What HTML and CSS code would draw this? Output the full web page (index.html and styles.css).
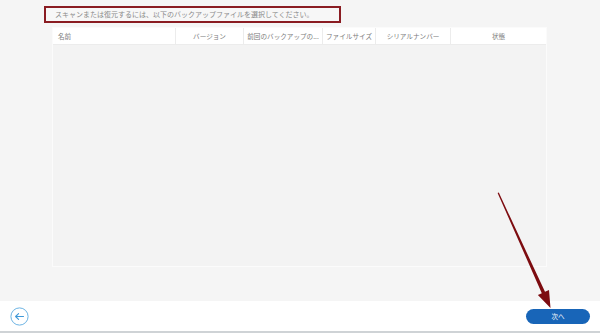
FILE: index.html
```html
<!DOCTYPE html>
<html lang="ja">
<head>
<meta charset="utf-8">
<link rel="stylesheet" href="styles.css">
</head>
<body>
<div class="page">
  <main class="main">
    <div class="notice">スキャンまたは復元するには、以下のバックアップファイルを選択してください。</div>
    <div class="table">
      <div class="thead">
        <div class="th c1 left">名前</div>
        <div class="th c2">バージョン</div>
        <div class="th c3">前回のバックアップの...</div>
        <div class="th c4">ファイルサイズ</div>
        <div class="th c5">シリアルナンバー</div>
        <div class="th c6">状態</div>
      </div>
      <div class="tbody"></div>
    </div>
  </main>
  <footer class="footer">
    <button class="back" aria-label="戻る">
      <svg width="19" height="19" viewBox="0 0 19 19">
        <circle cx="9.5" cy="9.5" r="8.6" fill="none" stroke="#6cb3e3" stroke-width="1"/>
        <path d="M13.5 9.5H5.8M8.6 6.6L5.6 9.5L8.6 12.4" fill="none" stroke="#3f98d8" stroke-width="1.1" stroke-linecap="round" stroke-linejoin="round"/>
      </svg>
    </button>
    <button class="next">次へ</button>
  </footer>
  <svg class="pointer" width="600" height="333" viewBox="0 0 600 333">
    <polygon points="497.6,193 498.8,192.6 545,291.8 549,289.9 550.5,308 537.9,294.9 541.8,293.2" fill="#7d0c10"/>
  </svg>
</div>
</body>
</html>
```

FILE: styles.css
```css
* { box-sizing: border-box; }
html, body {
  margin: 0;
  padding: 0;
}
body {
  width: 600px;
  height: 333px;
  overflow: hidden;
  font-family: "Noto Sans CJK JP", "Noto Sans", sans-serif;
  background: #f5f5f5;
}
.page {
  position: relative;
  width: 600px;
  height: 333px;
  display: flex;
  flex-direction: column;
}
.main {
  height: 301px;
  background: #f5f5f5;
  padding-top: 6px;
}
.notice {
  margin-left: 44px;
  width: 297px;
  height: 17px;
  border: 2px solid #8a1c22;
  background: #f7f7f7;
  color: #8a8a8a;
  font-size: 7px;
  line-height: 13px;
  padding-left: 9px;
  white-space: nowrap;
}
.table {
  margin-top: 4px;
  margin-left: 52px;
  width: 495px;
  height: 240px;
  border: 1px solid #fbfbfb;
  display: flex;
  flex-direction: column;
}
.thead {
  display: flex;
  height: 17px;
  background: #ffffff;
  border-bottom: 1px solid #ececec;
}
.th {
  font-size: 6.6px;
  color: #7b7b7b;
  line-height: 16px;
  text-align: center;
  white-space: nowrap;
  border-right: 1px solid #ececec;
  padding: 0 2px;
}
.th.left { text-align: left; padding-left: 5px; }
.c1 { width: 123px; }
.c2 { width: 68px; }
.c3 { width: 79px; }
.c4 { width: 53px; padding: 0 1px; }
.c5 { width: 75px; }
.c6 { flex: 1; border-right: none; }
.tbody {
  flex: 1;
  background: #f3f3f3;
}
.footer {
  height: 32px;
  background: #ffffff;
  border-bottom: 2px solid #cfd3d6;
  display: flex;
  align-items: center;
  justify-content: space-between;
  padding: 0 10px 0 10px;
}
.back {
  width: 19px;
  height: 19px;
  padding: 0;
  border: none;
  background: none;
  display: flex;
}
.next {
  width: 64px;
  height: 15px;
  border: none;
  border-radius: 8px;
  background: #1865b8;
  color: #ffffff;
  font-family: "Noto Sans CJK JP", sans-serif;
  font-size: 6.5px;
  line-height: 15px;
  padding: 0;
}
.pointer {
  position: absolute;
  left: 0;
  top: 0;
  pointer-events: none;
}
```
